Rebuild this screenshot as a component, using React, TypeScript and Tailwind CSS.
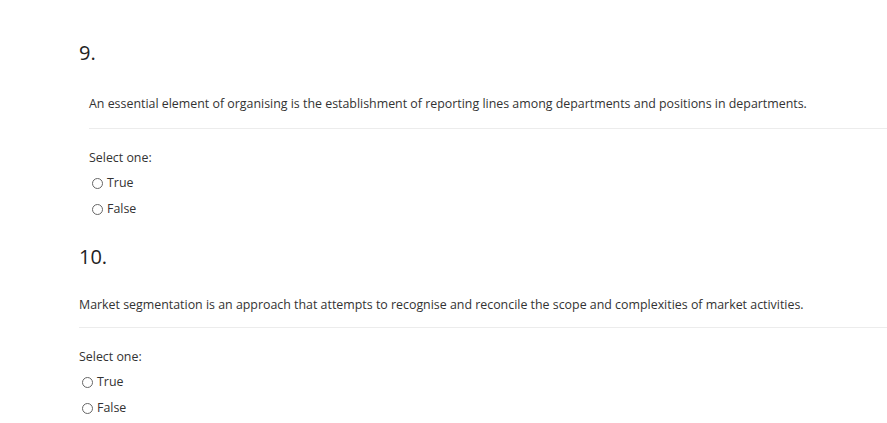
import React from "react";

type Question = {
  num: string;
  text: string;
  indent: string;
  top: string;
  gap: string;
  rule: string;
};

const QUESTIONS: Question[] = [
  {
    num: "9.",
    text: "An essential element of organising is the establishment of reporting lines among departments and positions in departments.",
    indent: "pl-[10px]",
    top: "pt-[38px]",
    gap: "mt-[24px]",
    rule: "mt-[12px]",
  },
  {
    num: "10.",
    text: "Market segmentation is an approach that attempts to recognise and reconcile the scope and complexities of market activities.",
    indent: "pl-0",
    top: "pt-[20px]",
    gap: "mt-[21px]",
    rule: "mt-[10px]",
  },
];

function Radio({ label }: { label: string }) {
  return (
    <label className="flex h-[26px] items-center gap-[4px] pl-[3px]">
      <span className="h-[11px] w-[11px] rounded-full border border-[#666]" />
      <span>{label}</span>
    </label>
  );
}

function QuestionBlock({ q }: { q: Question }) {
  return (
    <div className={q.top}>
      <h3 className="h-[30px] text-[20px] leading-[30px] text-[#222]">{q.num}</h3>
      <div className={q.indent}>
        <p className={`${q.gap} h-[24px] leading-[24px] text-[#333]`}>{q.text}</p>
        <div className={`${q.rule} border-t border-[#ececec]`} />
        <p className="mt-[20px] leading-[18px] text-[#333]">Select one:</p>
        <div className="mt-[3px] text-[#333]">
          <Radio label="True" />
          <Radio label="False" />
        </div>
      </div>
    </div>
  );
}

export default function App() {
  return (
    <div
      className="min-h-[423px] bg-white pl-[79px] text-[12.4px]"
      style={{ fontFamily: "'Open Sans', 'Noto Sans', sans-serif" }}
    >
      {QUESTIONS.map((q) => (
        <QuestionBlock key={q.num} q={q} />
      ))}
    </div>
  );
}
